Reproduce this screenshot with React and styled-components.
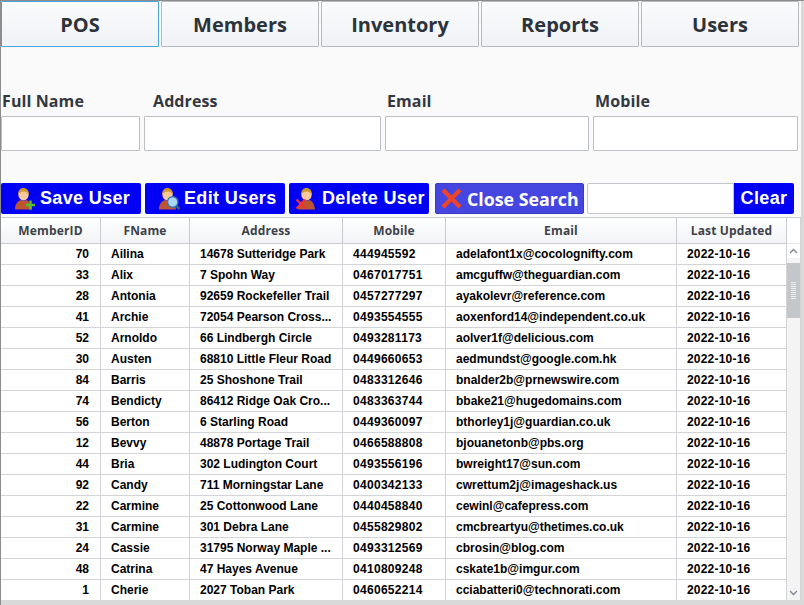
import React from 'react';
import styled, { createGlobalStyle } from 'styled-components';

const GlobalStyle = createGlobalStyle`
  html, body {
    margin: 0;
    padding: 0;
    background: #d9d9d9;
  }
`;

const Window = styled.div`
  box-sizing: border-box;
  width: 804px;
  height: 605px;
  overflow: hidden;
  background: #d9d9d9;
  border-top: 1px solid #8c8c8c;
  border-left: 1px solid #8c8c8c;
  padding-right: 3px;
  padding-bottom: 5px;
`;

const Page = styled.div`
  height: 100%;
  background: #fafafa;
  display: flex;
  flex-direction: column;
  overflow: hidden;
`;

const TabBar = styled.div`
  display: flex;
  gap: 2px;
  padding-right: 2px;
  height: 46px;
  flex-shrink: 0;
`;

const Tab = styled.div`
  box-sizing: border-box;
  width: 158px;
  display: flex;
  align-items: center;
  justify-content: center;
  font-family: 'Open Sans', sans-serif;
  font-weight: 700;
  font-size: 20px;
  color: #2d333b;
  background: linear-gradient(#fbfbfc, #eff2f6);
  border: 1px solid ${(p) => (p.$active ? '#48a3de' : '#b6b9bd')};
  border-radius: 1px;
`;

const FormRow = styled.div`
  display: grid;
  grid-template-columns: 139px 237px 204px 205px;
  column-gap: 4px;
  margin-top: 42px;
  padding-right: 4px;
`;

const Field = styled.div`
  display: flex;
  flex-direction: column;
`;

const Label = styled.label`
  font-family: 'Open Sans', sans-serif;
  font-weight: 700;
  font-size: 16px;
  letter-spacing: 0.1px;
  line-height: 24px;
  height: 27px;
  color: #33383f;
  padding-left: ${(p) => p.$indent}px;
`;

const TextBox = styled.input`
  box-sizing: border-box;
  height: 35px;
  width: 100%;
  background: #fff;
  border: 1px solid #bcc0c5;
  border-radius: 1px;
  outline: none;
  margin: 0;
`;

const Toolbar = styled.div`
  display: flex;
  height: 31px;
  margin-top: 32px;
  padding-right: 7px;
`;

const ActionButton = styled.button`
  box-sizing: border-box;
  width: ${(p) => p.$width}px;
  margin-right: ${(p) => p.$gap}px;
  height: 31px;
  padding: 0 0 0 ${(p) => p.$pad}px;
  display: flex;
  align-items: center;
  gap: 2px;
  background: #0000f5;
  color: #fff;
  border: none;
  border-radius: 2px;
  font-family: 'Liberation Sans', Arial, sans-serif;
  font-weight: 700;
  font-size: 18px;
  letter-spacing: 0.35px;
  white-space: nowrap;
`;

const CloseButton = styled(ActionButton)`
  background: #4545e0;
  border: 1px solid #3a3ac8;
  font-family: 'Open Sans', sans-serif;
  letter-spacing: 0;
  font-size: 17.8px;
  gap: 5px;
`;

const SearchBox = styled.input`
  box-sizing: border-box;
  width: 147px;
  height: 31px;
  margin: 0;
  background: #fff;
  border: 1px solid #c3c6ca;
  border-radius: 2px 0 0 2px;
  outline: none;
`;

const ClearButton = styled.button`
  box-sizing: border-box;
  width: 60px;
  height: 31px;
  padding: 0;
  background: #0000f5;
  color: #fff;
  border: none;
  border-radius: 0 2px 2px 0;
  font-family: 'Liberation Sans', Arial, sans-serif;
  font-weight: 700;
  font-size: 18px;
  letter-spacing: 0.35px;
`;

const TableArea = styled.div`
  flex: 1;
  display: flex;
  min-height: 0;
  margin-top: 3px;
  background: #fff;
  border-top: 1px solid #c8cbcf;
  border-right: 1px solid #d0d3d6;
  overflow: hidden;
`;

const TableClip = styled.div`
  width: 786px;
  flex-shrink: 0;
  overflow: hidden;
`;

const Grid = styled.table`
  width: 786px;
  table-layout: fixed;
  border-collapse: separate;
  border-spacing: 0;
`;

const HeadCell = styled.th`
  box-sizing: border-box;
  height: 26px;
  padding: 0;
  font-family: 'Open Sans', sans-serif;
  font-weight: 700;
  font-size: 12px;
  letter-spacing: 0.15px;
  color: #3d4249;
  text-align: center;
  background: linear-gradient(#ffffff, #f1f3f6);
  border-right: 1px solid #c8cbcf;
  border-bottom: 1px solid #c8cbcf;
`;

const Cell = styled.td`
  box-sizing: border-box;
  height: 21px;
  padding: ${(p) => (p.$right ? '0 11px 0 0' : '0 0 0 10px')};
  font-family: 'Liberation Sans', Arial, sans-serif;
  font-weight: 700;
  font-size: 12px;
  letter-spacing: ${(p) => p.$spacing || 0}px;
  color: #000;
  text-align: ${(p) => (p.$right ? 'right' : 'left')};
  white-space: nowrap;
  overflow: hidden;
  background: #fff;
  border-right: 1px solid #d2d4d7;
  border-bottom: 1px solid #d2d4d7;
`;

const ScrollBar = styled.div`
  flex: 1;
  display: flex;
  flex-direction: column;
  background: #f4f4f5;
`;

const ScrollHead = styled.div`
  height: 26px;
  flex-shrink: 0;
  background: #fff;
  border-bottom: 1px solid #e2e4e6;
  box-sizing: border-box;
`;

const ScrollArrow = styled.div`
  height: 14px;
  flex-shrink: 0;
  display: flex;
  align-items: center;
  justify-content: center;
  background: ${(p) => (p.$up ? '#fff' : 'transparent')};
`;

const ScrollTrack = styled.div`
  flex: 1;
  padding-top: 5px;
`;

const ScrollThumb = styled.div`
  height: 55px;
  background: #c3c7cb;
  display: flex;
  flex-direction: column;
  align-items: center;
  justify-content: center;
  gap: 1px;
`;

const Grip = styled.div`
  width: 5px;
  height: 1px;
  background: #eef0f1;
`;

const Person = () => (
  <>
    <path d="M1 22.500c0-5.500 2.500-8 6-9.500l2.500 1 3-1c3 1.500 5 4 5.500 9.500z" fill="#bd5430" />
    <ellipse cx="9.500" cy="7.500" rx="5.200" ry="6" fill="#f6c89a" />
    <path d="M4.300 8.500C3.500 3.500 6.500 1 9.500 1s6 2.500 5.200 7.500c-.6-2.500-2.700-4-5.200-4s-4.600 1.500-5.200 4z" fill="#d0972f" />
  </>
);

const AddUserIcon = () => (
  <svg width="24" height="24" viewBox="0 0 24 24">
    <Person />
    <path d="M16.500 13.500v9M12 18h9" stroke="#4fc62e" strokeWidth="2.400" />
  </svg>
);

const EditUserIcon = () => (
  <svg width="24" height="24" viewBox="0 0 24 24">
    <Person />
    <path d="M18.500 19l3 3" stroke="#2c5f8e" strokeWidth="2.600" />
    <circle cx="14.700" cy="15" r="5.200" fill="#a9d6f2" stroke="#3a78b0" strokeWidth="1.400" />
  </svg>
);

const DeleteUserIcon = () => (
  <svg width="24" height="24" viewBox="0 0 24 24">
    <g transform="translate(1 0)"><Person /></g>
    <path d="M0.500 12.500l9 9M9.500 12.500l-9 9" stroke="#f2342c" strokeWidth="2" />
  </svg>
);

const BigCrossIcon = () => (
  <svg width="21" height="21" viewBox="0 0 21 21">
    <path d="M2 2l17 17M19 2L2 19" stroke="#f04428" strokeWidth="4.200" />
  </svg>
);

const Chevron = ({ up }) => (
  <svg width="9" height="6" viewBox="0 0 9 6">
    <path d={up ? 'M1 5l3.500-3.500L8 5' : 'M1 1l3.500 3.500L8 1'} fill="none" stroke="#7d848c" strokeWidth="1.300" />
  </svg>
);

const tabs = ['POS', 'Members', 'Inventory', 'Reports', 'Users'];

const fields = [
  { label: 'Full Name', indent: 1 },
  { label: 'Address', indent: 9 },
  { label: 'Email', indent: 2 },
  { label: 'Mobile', indent: 2 },
];

const columns = [
  { title: 'MemberID', width: 100 },
  { title: 'FName', width: 89 },
  { title: 'Address', width: 153 },
  { title: 'Mobile', width: 103 },
  { title: 'Email', width: 231 },
  { title: 'Last Updated', width: 110 },
];

const members = [
  [70, 'Ailina', '14678 Sutteridge Park', '444945592', 'adelafont1x@cocolognifty.com'],
  [33, 'Alix', '7 Spohn Way', '0467017751', 'amcguffw@theguardian.com'],
  [28, 'Antonia', '92659 Rockefeller Trail', '0457277297', 'ayakolevr@reference.com'],
  [41, 'Archie', '72054 Pearson Cross...', '0493554555', 'aoxenford14@independent.co.uk'],
  [52, 'Arnoldo', '66 Lindbergh Circle', '0493281173', 'aolver1f@delicious.com'],
  [30, 'Austen', '68810 Little Fleur Road', '0449660653', 'aedmundst@google.com.hk'],
  [84, 'Barris', '25 Shoshone Trail', '0483312646', 'bnalder2b@prnewswire.com'],
  [74, 'Bendicty', '86412 Ridge Oak Cro...', '0483363744', 'bbake21@hugedomains.com'],
  [56, 'Berton', '6 Starling Road', '0449360097', 'bthorley1j@guardian.co.uk'],
  [12, 'Bevvy', '48878 Portage Trail', '0466588808', 'bjouanetonb@pbs.org'],
  [44, 'Bria', '302 Ludington Court', '0493556196', 'bwreight17@sun.com'],
  [92, 'Candy', '711 Morningstar Lane', '0400342133', 'cwrettum2j@imageshack.us'],
  [22, 'Carmine', '25 Cottonwood Lane', '0440458840', 'cewinl@cafepress.com'],
  [31, 'Carmine', '301 Debra Lane', '0455829802', 'cmcbreartyu@thetimes.co.uk'],
  [24, 'Cassie', '31795 Norway Maple ...', '0493312569', 'cbrosin@blog.com'],
  [48, 'Catrina', '47 Hayes Avenue', '0410809248', 'cskate1b@imgur.com'],
  [1, 'Cherie', '2027 Toban Park', '0460652214', 'cciabatteri0@technorati.com'],
];

const App = () => (
  <Window>
    <GlobalStyle />
    <Page>
      <TabBar>
        {tabs.map((tab, idx) => (
          <Tab key={tab} $active={idx === 0}>{tab}</Tab>
        ))}
      </TabBar>

      <FormRow>
        {fields.map((f) => (
          <Field key={f.label}>
            <Label $indent={f.indent}>{f.label}</Label>
            <TextBox />
          </Field>
        ))}
      </FormRow>

      <Toolbar>
        <ActionButton $width={140} $gap={4} $pad={13}><AddUserIcon />Save User</ActionButton>
        <ActionButton $width={140} $gap={4} $pad={13}><EditUserIcon />Edit Users</ActionButton>
        <ActionButton $width={140} $gap={6} $pad={7}><DeleteUserIcon />Delete User</ActionButton>
        <CloseButton $width={149} $gap={3} $pad={5}><BigCrossIcon />Close Search</CloseButton>
        <SearchBox />
        <ClearButton>Clear</ClearButton>
      </Toolbar>

      <TableArea>
        <TableClip>
          <Grid>
            <colgroup>
              {columns.map((c) => <col key={c.title} width={c.width} />)}
            </colgroup>
            <thead>
              <tr>
                {columns.map((c) => <HeadCell key={c.title}>{c.title}</HeadCell>)}
              </tr>
            </thead>
            <tbody>
              {members.map((m) => (
                <tr key={m[0]}>
                  <Cell $right>{m[0]}</Cell>
                  <Cell>{m[1]}</Cell>
                  <Cell>{m[2]}</Cell>
                  <Cell $spacing={0.3}>{m[3]}</Cell>
                  <Cell>{m[4]}</Cell>
                  <Cell $spacing={0.2}>2022-10-16</Cell>
                </tr>
              ))}
            </tbody>
          </Grid>
        </TableClip>
        <ScrollBar>
          <ScrollHead />
          <ScrollArrow $up><Chevron up /></ScrollArrow>
          <ScrollTrack>
            <ScrollThumb>
              {[...Array(9)].map((_, i) => <Grip key={i} />)}
            </ScrollThumb>
          </ScrollTrack>
          <ScrollArrow><Chevron /></ScrollArrow>
        </ScrollBar>
      </TableArea>
    </Page>
  </Window>
);

export default App;
